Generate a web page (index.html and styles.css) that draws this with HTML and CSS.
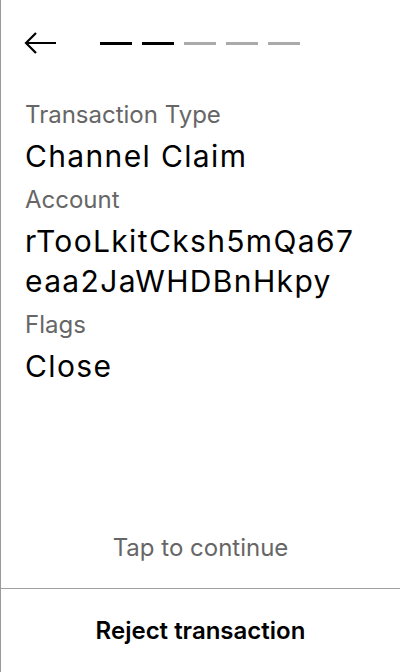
FILE: index.html
```html
<!DOCTYPE html>
<html>
<head>
<meta charset="utf-8">
<link rel="stylesheet" href="styles.css">
</head>
<body>
<div class="screen">
  <div class="header">
    <svg class="back" width="32" height="24" viewBox="0 0 32 24">
      <path d="M32 12H2M12 2L2 12L12 22" fill="none" stroke="#000" stroke-width="2.2"/>
    </svg>
    <div class="steps">
      <span class="step on"></span>
      <span class="step on"></span>
      <span class="step"></span>
      <span class="step"></span>
      <span class="step"></span>
    </div>
  </div>
  <div class="fields">
    <div class="label">Transaction Type</div>
    <div class="value">Channel Claim</div>
    <div class="label">Account</div>
    <div class="value">rTooLkitCksh5mQa67<br>eaa2JaWHDBnHkpy</div>
    <div class="label">Flags</div>
    <div class="value">Close</div>
  </div>
  <div class="tap">Tap to continue</div>
  <div class="reject">Reject transaction</div>
</div>
</body>
</html>
```
FILE: styles.css
```css
html, body {
  margin: 0;
  padding: 0;
  background: #fff;
}
.screen {
  width: 400px;
  height: 672px;
  box-sizing: border-box;
  border-left: 1px solid #9a9a9a;
  display: flex;
  flex-direction: column;
  font-family: Inter, "Noto Sans", sans-serif;
  color: #000;
}
.header {
  display: flex;
  align-items: center;
  padding: 31px 0 0 23px;
  height: 24px;
}
.back {
  display: block;
}
.steps {
  display: flex;
  gap: 10px;
  margin-left: 44px;
}
.step {
  width: 32px;
  height: 3px;
  background: #aaaaaa;
}
.step.on {
  background: #000;
}
.fields {
  padding: 44px 0 0 24px;
}
.label {
  font-size: 24px;
  line-height: 32px;
  color: #666;
}
.value {
  font-size: 30px;
  line-height: 40px;
  letter-spacing: 1.35px;
  color: #000;
  margin: 5px 0 8px;
}
.tap {
  margin-top: auto;
  text-align: center;
  font-size: 24px;
  line-height: 29px;
  color: #666;
  padding-bottom: 26px;
}
.reject {
  border-top: 1px solid #a0a0a0;
  height: 83px;
  display: flex;
  align-items: center;
  justify-content: center;
  font-size: 24px;
  font-weight: 600;
}
```
